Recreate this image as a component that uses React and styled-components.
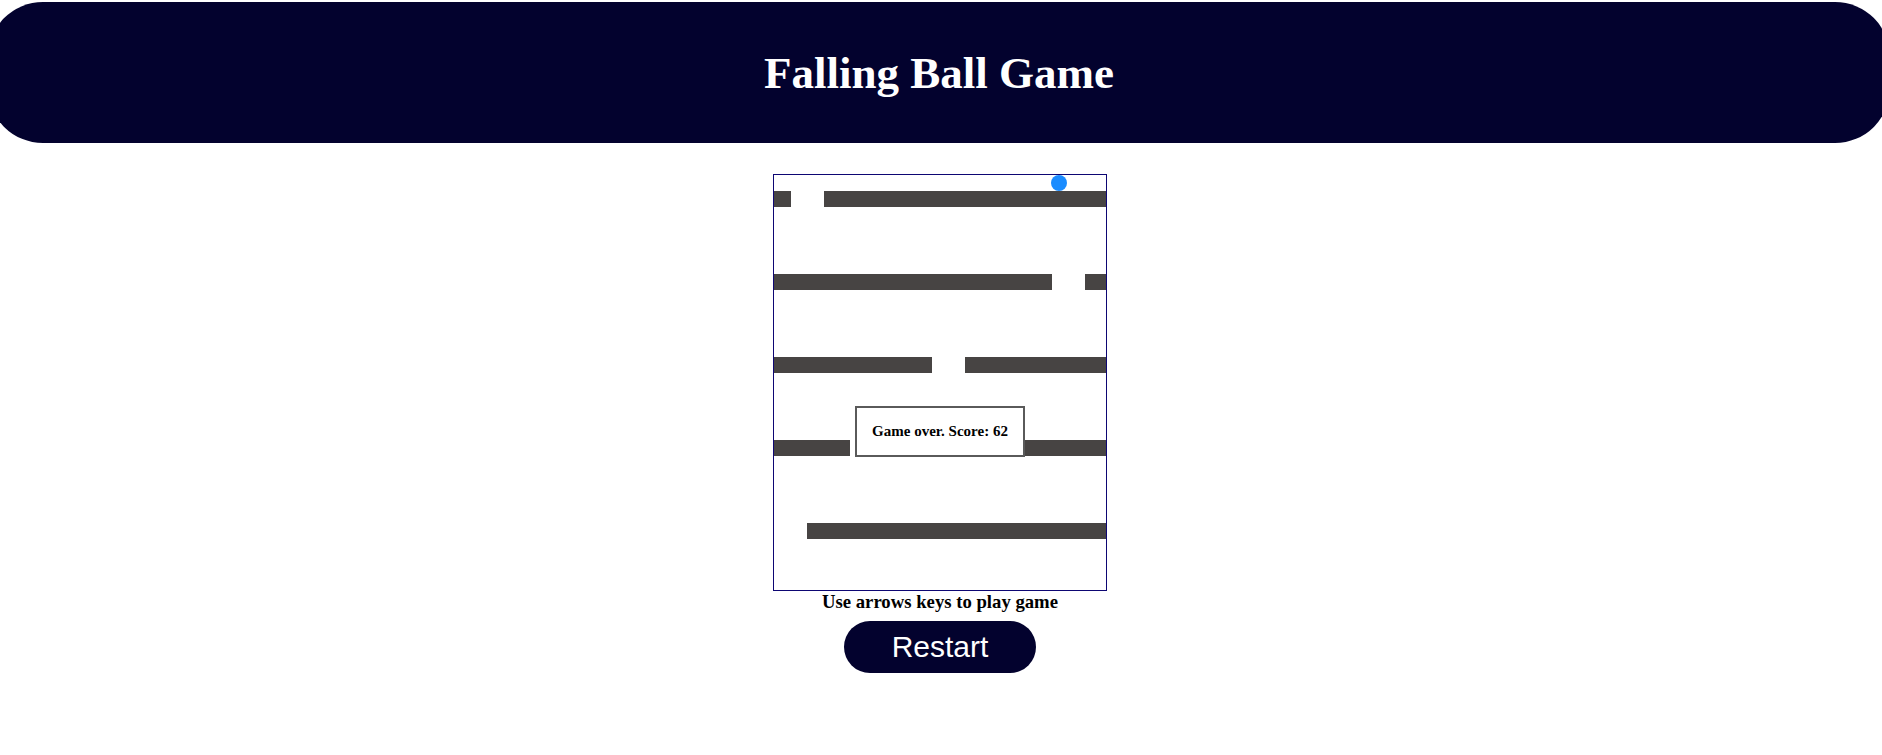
import React from 'react';
import styled, { createGlobalStyle } from 'styled-components';

const GlobalStyle = createGlobalStyle`
  html, body {
    margin: 0;
    padding: 0;
    overflow-x: hidden;
    background: #ffffff;
    font-family: "Liberation Serif", "Times New Roman", serif;
  }
`;

// left bar width of each row, the hole follows it
const rows = [17, 278, 158, 76, 0];

const App = () => {
  return (
    <Page>
      <GlobalStyle />
      <Header>
        <Title>Falling Ball Game</Title>
      </Header>
      <Main>
        <Board>
          {rows.map((left, i) => (
            <BarRow key={i}>
              <Bar style={{ width: left }} />
              <Bar $grow />
            </BarRow>
          ))}
          <Ball />
          <GameOver>Game over. Score: 62</GameOver>
        </Board>
        <Hint>Use arrows keys to play game</Hint>
        <RestartButton>Restart</RestartButton>
      </Main>
    </Page>
  );
};

export default App;

const Page = styled.div`
  padding-top: 2px;
`;

const Header = styled.header`
  margin: 0 -8px 0 -12px;
  height: 141px;
  background: #03022e;
  border-radius: 55px;
  display: flex;
  align-items: center;
  justify-content: center;
`;

const Title = styled.h1`
  margin: 0;
  color: #ffffff;
  font-size: 45px;
  font-weight: bold;
  font-family: "Liberation Serif", "Times New Roman", serif;
`;

const Main = styled.main`
  display: flex;
  flex-direction: column;
  align-items: center;
  padding: 31px 2px 0 0;
`;

const Board = styled.div`
  position: relative;
  width: 332px;
  height: 399px;
  padding-top: 16px;
  border: 1px solid #0d0673;
  overflow: hidden;
  background: #ffffff;
  display: flex;
  flex-direction: column;
  gap: 67px;
`;

const BarRow = styled.div`
  display: flex;
  gap: 33px;
  height: 16px;
`;

const Bar = styled.div`
  height: 16px;
  background: #474443;
  flex: ${p => (p.$grow ? '1' : '0 0 auto')};
`;

const Ball = styled.div`
  position: absolute;
  top: 0;
  left: 277px;
  width: 16px;
  height: 16px;
  border-radius: 50%;
  background: #1a8cff;
`;

const GameOver = styled.div`
  position: absolute;
  top: 231px;
  left: 81px;
  width: 166px;
  height: 47px;
  border: 2px solid #5a5a5a;
  background: #ffffff;
  display: flex;
  align-items: center;
  justify-content: center;
  font-size: 15px;
  font-weight: bold;
  color: #000000;
`;

const Hint = styled.h3`
  margin: 0;
  font-size: 18.72px;
  font-weight: bold;
  line-height: 22px;
  color: #000000;
`;

const RestartButton = styled.button`
  margin-top: 8px;
  width: 192px;
  height: 52px;
  border: none;
  border-radius: 26px;
  background: #03022e;
  color: #ffffff;
  font-family: "Liberation Sans", Arial, sans-serif;
  font-size: 30px;
  cursor: pointer;
`;
